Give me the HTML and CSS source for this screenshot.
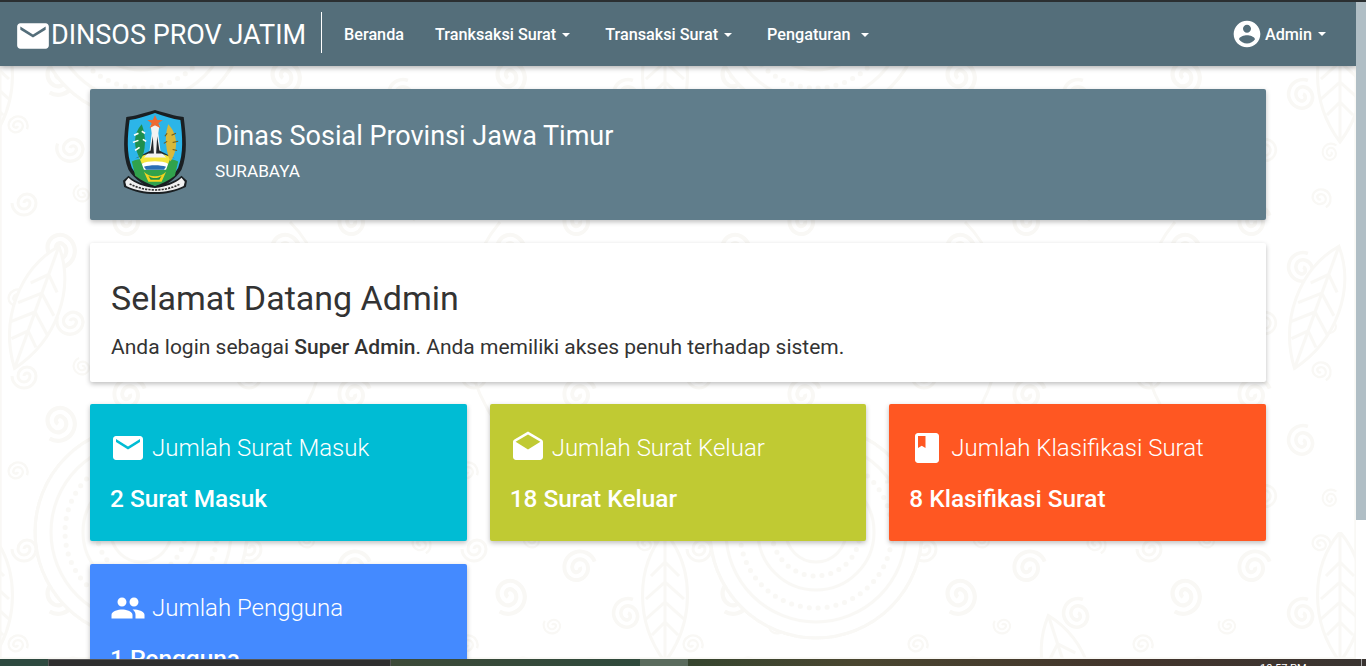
FILE: index.html
```html
<!DOCTYPE html>
<html>
<head>
    <meta charset="UTF-8">
    <title>Dinas Sosial Provinsi Jawa Timur</title>
    <link rel="stylesheet" href="styles.css">
</head>
<body>
    <svg class="icon-defs" width="0" height="0">
        <symbol id="i-mail" viewBox="0 0 24 24"><path d="M20 4H4c-1.1 0-2 .9-2 2v12c0 1.1.9 2 2 2h16c1.1 0 2-.9 2-2V6c0-1.1-.9-2-2-2zm0 4l-8 5-8-5V6l8 5 8-5v2z"/></symbol>
        <symbol id="i-drafts" viewBox="0 0 24 24"><path d="M21.99 8c0-.72-.37-1.35-.94-1.7L12 1 2.95 6.3C2.38 6.65 2 7.28 2 8v10c0 1.1.9 2 2 2h16c1.1 0 2-.9 2-2l-.01-10zM12 13L3.74 7.84 12 3l8.26 4.84L12 13z"/></symbol>
        <symbol id="i-book" viewBox="0 0 24 24"><path d="M18 2H6c-1.1 0-2 .9-2 2v16c0 1.1.9 2 2 2h12c1.1 0 2-.9 2-2V4c0-1.1-.9-2-2-2zM6 4h5v8l-2.5-1.5L6 12V4z"/></symbol>
        <symbol id="i-group" viewBox="0 0 24 24"><path d="M16 11c1.66 0 2.99-1.34 2.99-3S17.66 5 16 5c-1.66 0-3 1.34-3 3s1.34 3 3 3zm-8 0c1.66 0 2.99-1.34 2.99-3S9.66 5 8 5C6.34 5 5 6.34 5 8s1.34 3 3 3zm0 2c-2.33 0-7 1.17-7 3.5V19h14v-2.5c0-2.33-4.67-3.5-7-3.5zm8 0c-.29 0-.62.02-.97.05 1.16.84 1.97 1.97 1.97 3.45V19h6v-2.5c0-2.33-4.67-3.5-7-3.5z"/></symbol>
        <symbol id="i-account" viewBox="0 0 24 24"><path d="M12 2C6.48 2 2 6.48 2 12s4.48 10 10 10 10-4.48 10-10S17.52 2 12 2zm0 3c1.66 0 3 1.34 3 3s-1.34 3-3 3-3-1.34-3-3 1.34-3 3-3zm0 14.2c-2.5 0-4.71-1.28-6-3.22.03-1.99 4-3.08 6-3.08 1.99 0 5.97 1.09 6 3.08-1.29 1.94-3.5 3.22-6 3.22z"/></symbol>
    </svg>

    <div class="screen">
        <div class="top-edge"></div>
        <div class="window">
            <div class="page">
                <!-- batik pattern behind the content -->
                <svg class="batik" width="100%" height="100%">
                    <defs>
                        <path id="swirl" d="M0 0a3 3 0 0 1 6 0a6 6 0 0 1-12 0a9 9 0 0 1 18 0a12 12 0 0 1-24 0"/>
                        <g id="rosette">
                            <circle r="106" class="mask"/>
                            <circle r="30"/>
                            <circle r="44" class="dots"/>
                            <circle r="58"/>
                            <circle r="76" class="dots"/>
                            <circle r="90"/>
                            <circle r="106"/>
                        </g>
                        <path id="leaf" class="mask" d="M0-70C30-35 30 20 0 60C-30 20-30-35 0-70zM0-70V60M0-40l-14 14M0-40l14 14M0-20l-19 17M0-20l19 17M0 0l-19 17M0 0l19 17M0 20l-13 13M0 20l13 13"/>
                        <pattern id="swirl-tile" width="225" height="173" patternUnits="userSpaceOnUse">
                            <use href="#swirl" transform="translate(24 28)"/>
                            <use href="#swirl" transform="translate(82 18) scale(0.7) rotate(70)"/>
                            <use href="#swirl" transform="translate(130 46) scale(1.3) rotate(160)"/>
                            <use href="#swirl" transform="translate(196 24) scale(0.8) rotate(240)"/>
                            <use href="#swirl" transform="translate(58 76) scale(1.4) rotate(300)"/>
                            <use href="#swirl" transform="translate(102 104) scale(0.7) rotate(30)"/>
                            <use href="#swirl" transform="translate(178 92) scale(1.2) rotate(110)"/>
                            <use href="#swirl" transform="translate(18 124) scale(0.8) rotate(200)"/>
                            <use href="#swirl" transform="translate(70 146) scale(1.1) rotate(20)"/>
                            <use href="#swirl" transform="translate(140 148) scale(0.9) rotate(280)"/>
                            <use href="#swirl" transform="translate(206 150) scale(0.7) rotate(130)"/>
                        </pattern>
                        <pattern id="batik-tile" width="675" height="520" patternUnits="userSpaceOnUse" y="10">
                            <use href="#rosette" x="141" y="520"/>
                            <use href="#rosette" x="816" y="520"/>
                            <use href="#rosette" x="141" y="0"/>
                            <use href="#rosette" x="816" y="0"/>
                            <use href="#leaf" x="665" y="70"/>
                            <use href="#leaf" x="-10" y="70"/>
                            <use href="#leaf" x="395" y="150" transform="rotate(-18 395 150)"/>
                            <use href="#leaf" x="640" y="300" transform="rotate(20 640 300)"/>
                            <use href="#leaf" x="35" y="300" transform="rotate(20 35 300)"/>
                            <path d="M290 210C340 260 340 350 290 420C270 450 240 470 210 470M500 210C450 270 450 370 520 440"/>
                        </pattern>
                    </defs>
                    <rect width="100%" height="100%" fill="url(#swirl-tile)"/>
                    <rect width="100%" height="100%" fill="url(#batik-tile)"/>
                </svg>

                <nav class="navbar">
                    <a class="brand">
                        <svg class="brand-icon"><use href="#i-mail"/></svg>
                        <span class="brand-name">DINSOS PROV JATIM</span>
                    </a>
                    <ul class="nav-list">
                        <li class="nav-item nav-plain">Beranda</li>
                        <li class="nav-item">Tranksaksi Surat <span class="caret"></span></li>
                        <li class="nav-item">Transaksi Surat <span class="caret"></span></li>
                        <li class="nav-item">Pengaturan <span class="caret caret-far"></span></li>
                    </ul>
                    <div class="nav-user">
                        <svg class="user-icon"><use href="#i-account"/></svg>
                        <span>Admin</span> <span class="caret"></span>
                    </div>
                </nav>

                <main class="container">
                    <section class="hero">
                        <svg class="emblem" viewBox="3 1 58 84" preserveAspectRatio="none">
                            <path d="M6 8C14 7 22 4 32 1C42 4 50 7 58 8C60 26 62 44 56 60C51 70 40 76 32 80C24 76 13 70 8 60C2 44 4 26 6 8z" fill="#1a1f22"/>
                            <path d="M9 11C16 10 24 7 32 4C40 7 48 10 55 11C57 27 58 44 53 58C49 66 40 72 32 76C24 72 15 66 11 58C6 44 7 27 9 11z" fill="#2cb5e8"/>
                            <path d="M11 52C18 48 26 50 32 50C38 50 46 48 53 52L50 66C44 71 38 74 32 76C26 74 20 71 14 66z" fill="#31a24c"/>
                            <path d="M17 46L32 44L47 46L44 54H20z" fill="#f3e53b"/>
                            <path d="M20 54C26 51 38 51 44 54L42 60H22z" fill="#fff"/>
                            <path d="M22 57C27 55 37 55 42 57L40 60H24z" fill="#2a6fb5"/>
                            <path d="M28 16H36L35 24L37 42L42 48H22L27 42L29 24z" fill="#f2f2f2"/>
                            <path d="M30 27L31 44H26L14 49L28 41zM34 27L33 44H38L50 49L36 41z" fill="#23282b"/>
                            <path d="M32 6L34 11L39 11L35 14L37 19L32 16L27 19L29 14L25 11L30 11z" fill="#ee6a32"/>
                            <path d="M20 15C12 24 12 38 19 50C24 42 24 26 20 15z" fill="#1f8f4e"/>
                            <path d="M17 24L13 26M17 31L12 33M18 38L14 41M20 22L23 24M21 30L24 32" stroke="#fff" stroke-width="1.5"/>
                            <path d="M44 15C52 24 54 38 46 52C42 42 40 28 44 15z" fill="#d9b83a"/>
                            <path d="M47 26L51 24M48 33L53 32M48 40L52 41M43 24L41 27M43 32L40 34" stroke="#6d5c1c" stroke-width="1"/>
                            <path d="M22 62C27 68 37 68 42 62L38 72H26z" fill="#f3d21f"/>
                            <path d="M26 66C29 69 35 69 38 66L36 70H28z" fill="#1e8f46"/>
                            <path d="M3 71L8 66C14 72 22 75 32 76C42 75 50 72 56 66L61 71L60 77C50 82 42 84 32 84C22 84 14 82 4 77z" fill="#1a1f22"/>
                            <path d="M5 72L8 68C14 74 22 77 32 78C42 77 50 74 56 68L59 72L58 76C50 80 42 82 32 82C22 82 14 80 6 76z" fill="#f1f1f1"/>
                            <path d="M9 74C16 78 24 80 32 80C40 80 48 78 55 74" fill="none" stroke="#333" stroke-width="1.6" stroke-dasharray="2 1"/>
                        </svg>
                        <div class="hero-body">
                            <h2 class="hero-title">Dinas Sosial Provinsi Jawa Timur</h2>
                            <p class="hero-sub">SURABAYA</p>
                        </div>
                    </section>

                    <section class="welcome">
                        <h1 class="welcome-title">Selamat Datang Admin</h1>
                        <p class="welcome-text">Anda login sebagai <strong>Super Admin</strong>. Anda memiliki akses penuh terhadap sistem.</p>
                    </section>

                    <section class="stats">
                        <div class="stat stat-cyan">
                            <h3 class="stat-title"><svg class="stat-icon"><use href="#i-mail"/></svg>Jumlah Surat Masuk</h3>
                            <p class="stat-value">2 Surat Masuk</p>
                        </div>
                        <div class="stat stat-lime">
                            <h3 class="stat-title"><svg class="stat-icon"><use href="#i-drafts"/></svg>Jumlah Surat Keluar</h3>
                            <p class="stat-value">18 Surat Keluar</p>
                        </div>
                        <div class="stat stat-orange">
                            <h3 class="stat-title"><svg class="stat-icon"><use href="#i-book"/></svg>Jumlah Klasifikasi Surat</h3>
                            <p class="stat-value">8 Klasifikasi Surat</p>
                        </div>
                        <div class="stat stat-blue">
                            <h3 class="stat-title"><svg class="stat-icon"><use href="#i-group"/></svg>Jumlah Pengguna</h3>
                            <p class="stat-value">1 Pengguna</p>
                        </div>
                    </section>
                </main>
            </div>
            <div class="scrollbar">
                <div class="scroll-thumb"></div>
            </div>
        </div>
        <div class="taskbar">
            <div class="task-start"></div>
            <div class="task-app"></div>
            <div class="task-gap"></div>
            <div class="task-active"></div>
            <div class="task-rest"><span class="task-clock">10:57 PM</span></div>
            <div class="task-end"></div>
        </div>
    </div>
</body>
</html>
```

FILE: styles.css
```css
* {
    box-sizing: border-box;
}
html, body {
    margin: 0;
    height: 100%;
    overflow: hidden;
}
body {
    font-family: Roboto, "Liberation Sans", sans-serif;
    color: #333;
    background-color: #fff;
}
h1, h2, h3, p, ul {
    margin: 0;
    padding: 0;
}
.icon-defs {
    display: block;
    height: 0;
}

.screen {
    display: flex;
    flex-direction: column;
    height: 666px;
}
.top-edge {
    height: 2px;
    background-color: #2b2f31;
}
.window {
    display: flex;
    flex: 1;
    min-height: 0;
}
.page {
    flex: 1;
    min-width: 0;
    overflow: hidden;
    position: relative;
}
.batik {
    position: absolute;
    top: 0;
    left: 0;
    fill: none;
    stroke: #f9f8f5;
    stroke-width: 3;
}
.batik .mask {
    fill: #fff;
}
.batik .dots {
    stroke-width: 5;
    stroke-linecap: round;
    stroke-dasharray: 0 9;
}

/* navbar */
.navbar {
    display: flex;
    align-items: center;
    height: 64px;
    padding-left: 17px;
    padding-right: 30px;
    background-color: #546e7a;
    color: #fff;
    box-shadow: 0 2px 5px rgba(0, 0, 0, 0.3);
    position: relative;
}
.brand {
    display: flex;
    align-items: center;
    height: 41px;
    margin-bottom: 4px;
    padding-top: 4px;
    padding-right: 15px;
    border-right: 1px solid #fff;
    font-size: 27px;
    font-weight: 400;
}
.brand-icon {
    width: 38px;
    height: 38px;
    margin-top: 4px;
    margin-left: -3px;
    margin-right: -1px;
    fill: #fff;
}
.brand-name {
    margin-top: 2px;
}
.nav-list {
    display: flex;
    list-style: none;
    margin-left: 22px;
    font-size: 16.2px;
    font-weight: 500;
    gap: 35px;
}
.nav-plain {
    margin-right: -4px;
}
.nav-user {
    display: flex;
    align-items: center;
    gap: 4px;
    margin-left: auto;
    font-size: 16.2px;
    font-weight: 500;
}
.user-icon {
    width: 32px;
    height: 32px;
    margin-right: -2px;
    fill: #fff;
}
.caret {
    display: inline-block;
    width: 0;
    height: 0;
    margin-left: 2px;
    vertical-align: middle;
    border-top: 4px solid #fff;
    border-left: 4.5px solid transparent;
    border-right: 4.5px solid transparent;
}
.caret-far {
    margin-left: 6px;
}

/* content */
.container {
    padding: 23px 90px 0;
    display: flex;
    flex-direction: column;
    gap: 23px;
    position: relative;
}
.hero {
    display: flex;
    align-items: center;
    gap: 28px;
    height: 131px;
    padding-left: 33px;
    background-color: #607d8b;
    color: #fff;
    border-radius: 2px;
    box-shadow: 0 2px 5px rgba(0, 0, 0, 0.26);
}
.emblem {
    width: 64px;
    height: 85px;
    margin-top: -4px;
}
.hero-body {
    padding-bottom: 8px;
}
.hero-title {
    font-size: 27px;
    font-weight: 400;
    margin-bottom: 9px;
}
.hero-sub {
    font-size: 17.2px;
}
.welcome {
    height: 139px;
    padding: 35px 21px 0;
    background-color: #fff;
    border-radius: 2px;
    box-shadow: 0 2px 5px rgba(0, 0, 0, 0.26);
}
.welcome-title {
    font-size: 34px;
    font-weight: 400;
    margin-bottom: 17px;
}
.welcome-text {
    font-size: 21px;
    font-weight: 400;
}
.welcome-text strong {
    font-weight: 500;
}
.stats {
    display: grid;
    grid-template-columns: repeat(3, 1fr);
    gap: 23px;
    margin-top: -1px;
}
.stat {
    height: 137px;
    padding: 26px 20px 0;
    color: #fff;
    border-radius: 2px;
    box-shadow: 0 2px 5px rgba(0, 0, 0, 0.26);
}
.stat-cyan {
    background-color: #00bcd4;
}
.stat-lime {
    background-color: #c0ca33;
}
.stat-orange {
    background-color: #ff5722;
}
.stat-blue {
    background-color: #448aff;
}
.stat-title {
    display: flex;
    align-items: center;
    font-size: 24px;
    font-weight: 300;
    margin-bottom: 18px;
}
.stat-icon {
    width: 36px;
    height: 36px;
    fill: #fff;
    margin-right: 6px;
}
.stat-value {
    font-size: 24.4px;
    font-weight: 500;
}

/* scrollbar and desktop strip */
.scrollbar {
    width: 10px;
    background-color: #fff;
}
.scroll-thumb {
    height: 518px;
    background-color: #b0bec5;
}
.taskbar {
    display: flex;
    height: 7px;
    overflow: hidden;
}
.task-start {
    width: 48px;
    background-color: #2e4a40;
}
.task-app {
    width: 343px;
    background-color: #2f2f2f;
    border: 1px solid #555;
    border-bottom: 0;
}
.task-gap {
    width: 249px;
    background: linear-gradient(90deg, #3d4a38, #2f4a3c);
}
.task-active {
    width: 48px;
    background-color: #5a6b5d;
}
.task-rest {
    flex: 1;
    padding-left: 572px;
    background: linear-gradient(90deg, #36452f, #4a4630 25%, #43352c 65%, #3a3431);
    color: #fff;
    font-size: 11px;
    line-height: 19px;
}
.task-end {
    width: 5px;
    background-color: #3a3431;
    border-left: 1px solid #a8a8a8;
}
```
